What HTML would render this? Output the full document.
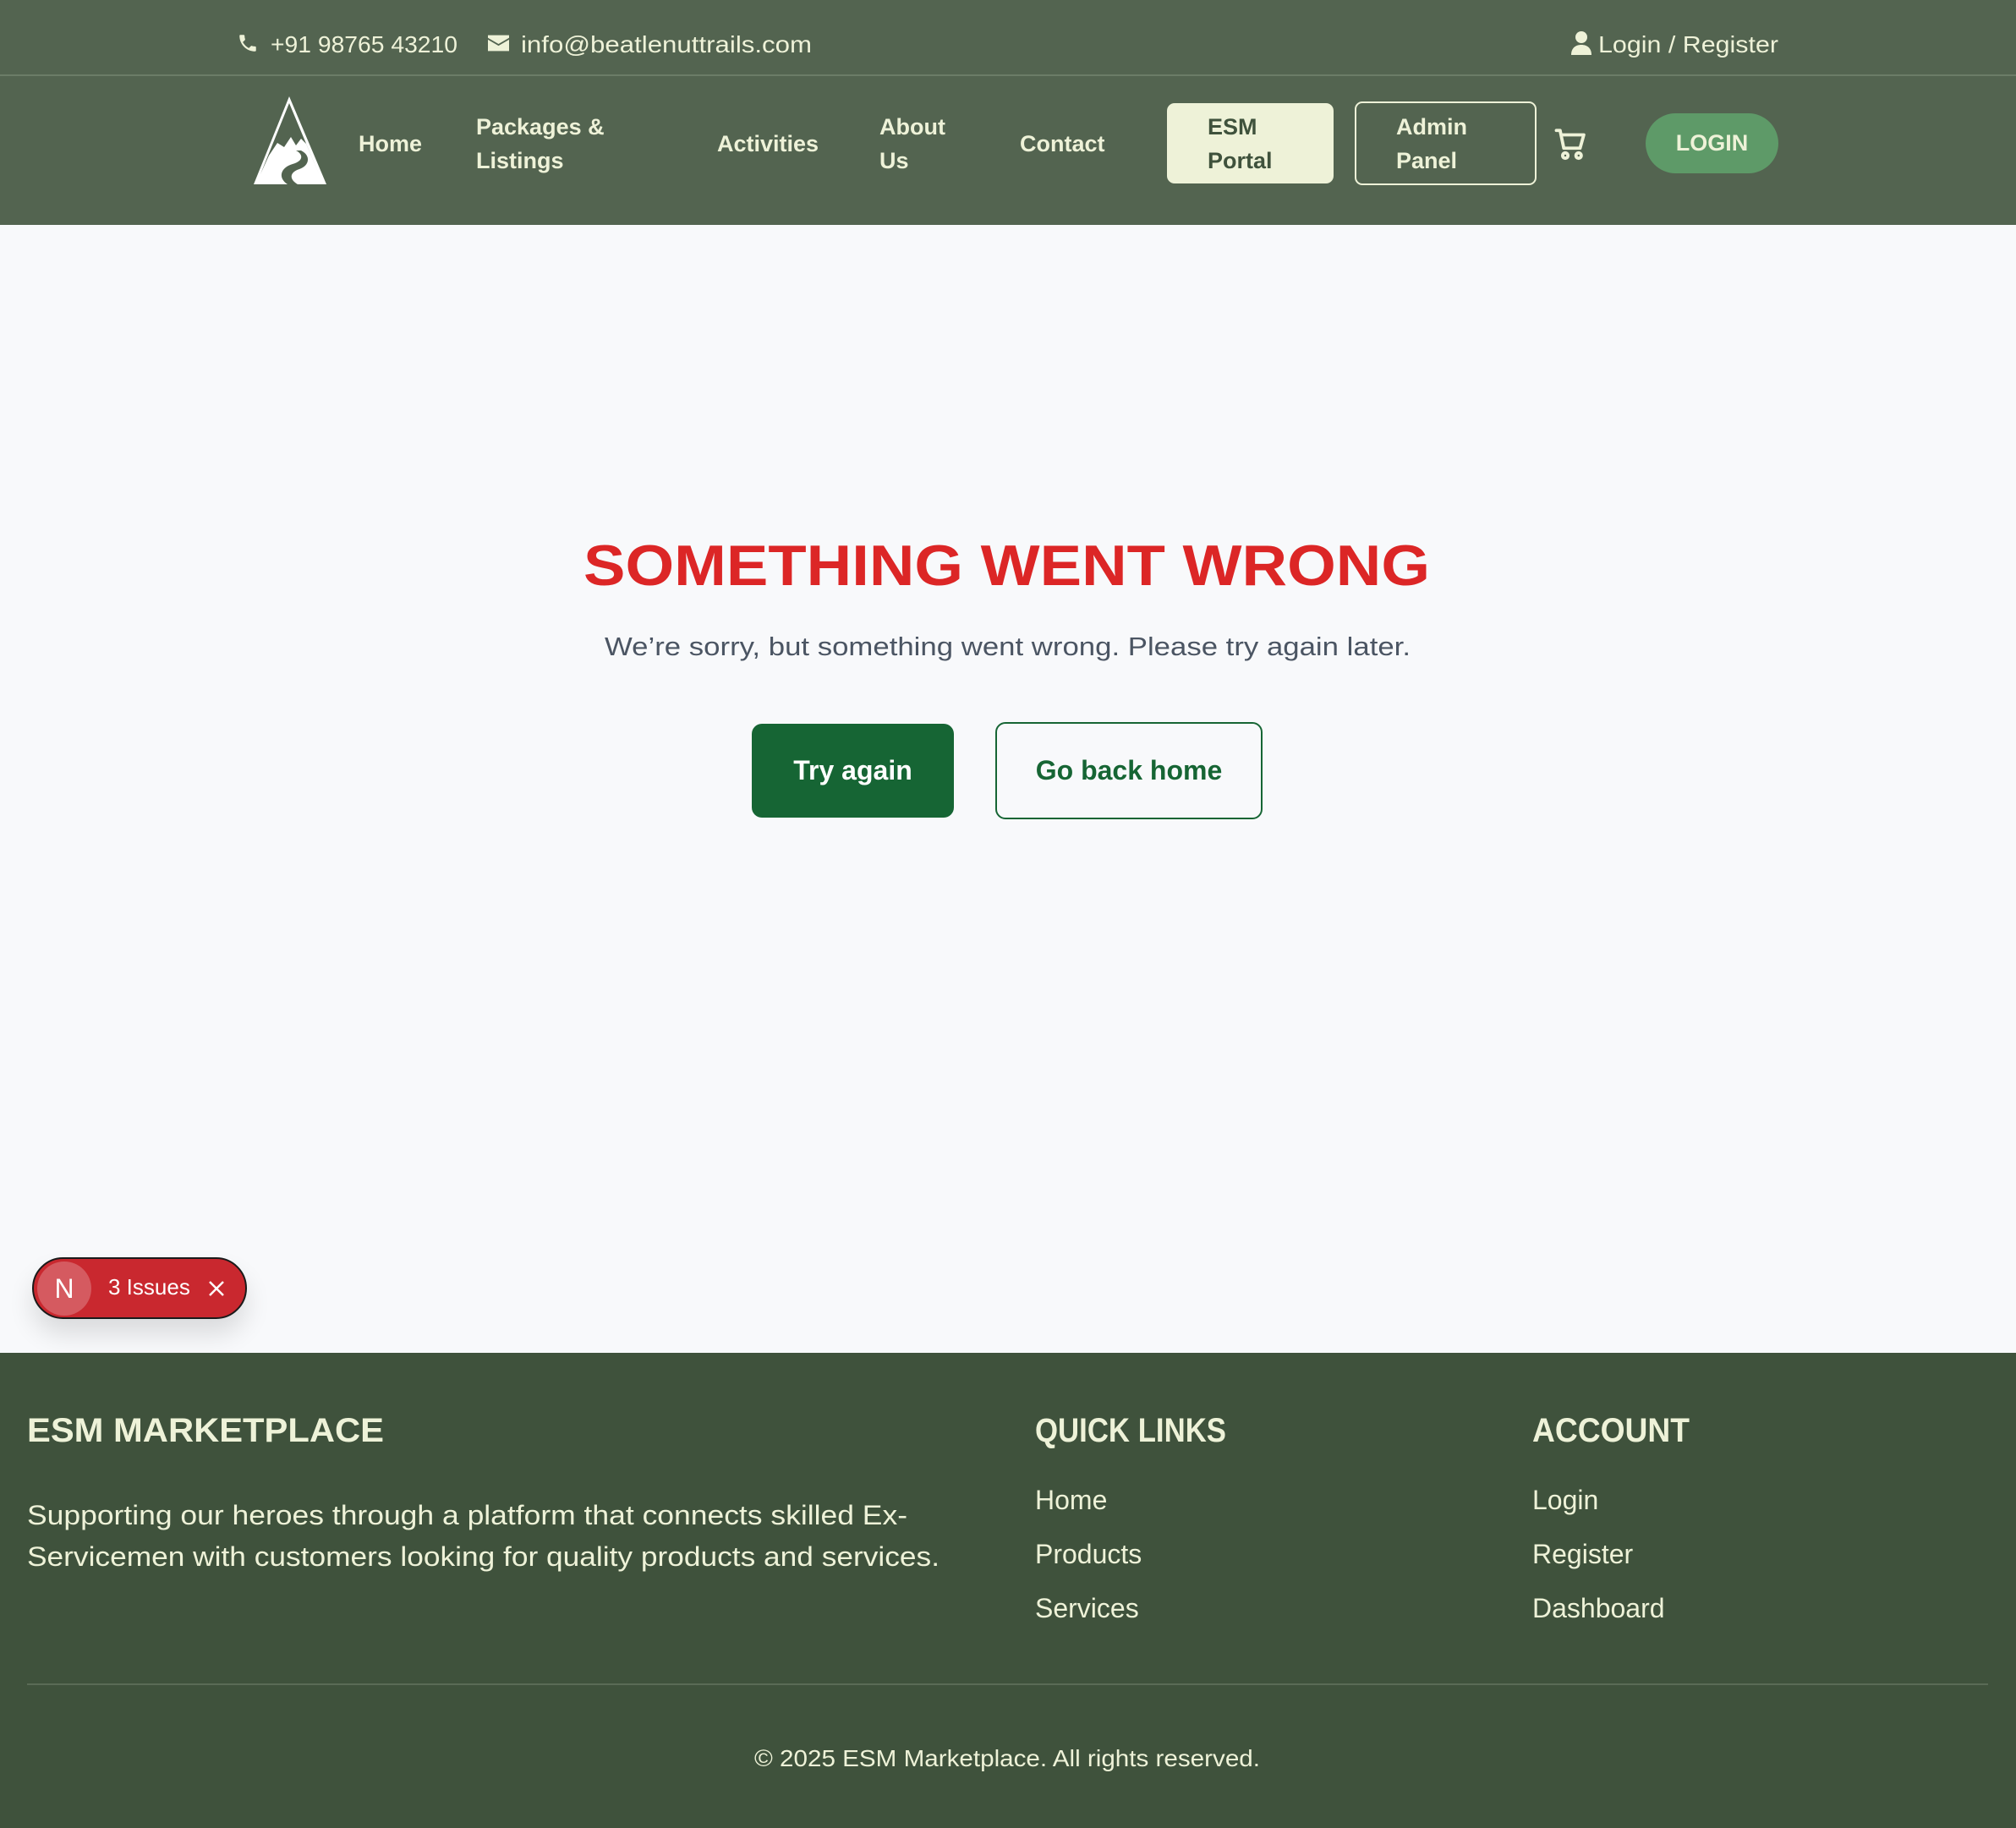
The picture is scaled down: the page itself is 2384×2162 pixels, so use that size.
<!DOCTYPE html>
<html><head><meta charset="utf-8"><style>
*{margin:0;padding:0;box-sizing:border-box}
body{width:2384px;height:2162px;background:#f8f9fb;font-family:"Liberation Sans",sans-serif;position:relative;overflow:hidden}
.a{position:absolute;white-space:nowrap}
.hdr{position:absolute;left:0;top:0;width:2384px;height:266px;background:#536450}
.line{position:absolute;left:0;top:88px;width:2384px;height:2px;background:#6b7c67}
.c{color:#eef2d8}
.nav{font-size:27px;font-weight:bold;color:#eef2d8;line-height:40px}
.foot{position:absolute;left:0;top:1600px;width:2384px;height:562px;background:#3f523c}
.fl{font-size:32px;color:#eef2d8}
</style></head><body>
<div class="hdr"></div><div class="line"></div>
<svg class="a" style="left:280px;top:38px" width="26" height="26" viewBox="0 0 24 24"><path fill="#eef2d8" d="M6.6 10.8c1.4 2.8 3.8 5.1 6.6 6.6l2.2-2.2c.3-.3.7-.4 1-.2 1.1.4 2.3.6 3.6.6.6 0 1 .4 1 1V20c0 .6-.4 1-1 1C10.6 21 3 13.4 3 4c0-.6.4-1 1-1h3.5c.6 0 1 .4 1 1 0 1.3.2 2.5.6 3.6.1.3 0 .7-.2 1z"/></svg>
<svg class="a" style="left:316px;top:30px" width="240" height="44"><text x="4" y="32" textLength="221" lengthAdjust="spacingAndGlyphs" font-family="Liberation Sans" font-size="28" fill="#eef2d8">+91 98765 43210</text></svg>
<svg class="a" style="left:577px;top:41px" width="25" height="20" viewBox="0 0 24 18"><path fill="#eef2d8" d="M0 0h24v3L12 10 0 3zM0 5l12 7 12-7v13H0z"/></svg>
<svg class="a" style="left:612px;top:30px" width="360" height="44"><text x="4" y="32" textLength="344" lengthAdjust="spacingAndGlyphs" font-family="Liberation Sans" font-size="28" fill="#eef2d8">info@beatlenuttrails.com</text></svg>
<svg class="a" style="left:1858px;top:37px" width="24" height="28" viewBox="0 0 24 28"><circle cx="12" cy="7" r="7" fill="#eef2d8"/><path fill="#eef2d8" d="M0 28c0-8 5-12 12-12s12 4 12 12z"/></svg>
<svg class="a" style="left:1886px;top:30px" width="230" height="44"><text x="4" y="32" textLength="213" lengthAdjust="spacingAndGlyphs" font-family="Liberation Sans" font-size="28" fill="#eef2d8">Login / Register</text></svg>

<svg class="a" style="left:298px;top:114px" width="90" height="106" viewBox="0 0 90 106">
<path fill="#fff" d="M44 0 L2 104 L88 104 Z"/>
<path fill="#536450" d="M44 8 L10 92 L20 70 L30 55 L38 60 L46 48 L52 58 L58 50 L64 56 L80 94 Z"/>
<path fill="#536450" d="M42 104 C30 96 34 84 48 80 C62 76 60 68 52 64 L58 64 C70 70 68 82 56 86 C44 90 44 98 54 104 Z"/>
</svg>
<div class="a nav" style="left:424px;top:150px">Home</div>
<div class="a nav" style="left:563px;top:130px">Packages &amp;<br>Listings</div>
<div class="a nav" style="left:848px;top:150px">Activities</div>
<div class="a nav" style="left:1040px;top:130px">About<br>Us</div>
<div class="a nav" style="left:1206px;top:150px">Contact</div>
<div class="a" style="left:1380px;top:122px;width:197px;height:95px;background:#eef2d8;border-radius:9px"></div>
<div class="a nav" style="left:1428px;top:130px;color:#3f523c">ESM<br>Portal</div>
<div class="a" style="left:1602px;top:120px;width:215px;height:99px;border:2px solid #eef2d8;border-radius:9px"></div>
<div class="a nav" style="left:1651px;top:130px">Admin<br>Panel</div>
<svg class="a" style="left:1837px;top:148px" width="42" height="44" viewBox="0 0 24 24" fill="none" stroke="#eef2d8" stroke-width="2.2" stroke-linecap="round" stroke-linejoin="round"><path d="M2 3h2.5l2.5 12h11l2.5-9H6"/><circle cx="8" cy="20" r="1.8"/><circle cx="17" cy="20" r="1.8"/></svg>
<div class="a" style="left:1946px;top:134px;width:157px;height:71px;background:#5e9a68;border-radius:36px;color:#eef2d8;font-size:27px;font-weight:bold;line-height:71px;text-align:center">LOGIN</div>

<svg class="a" style="left:680px;top:630px" width="1024" height="80"><text x="10" y="62" textLength="1001" lengthAdjust="spacingAndGlyphs" font-family="Liberation Sans" font-weight="900" font-size="68" fill="#dc2626">SOMETHING WENT WRONG</text></svg>
<svg class="a" style="left:700px;top:740px" width="990" height="50"><text x="15" y="35" textLength="953" lengthAdjust="spacingAndGlyphs" font-family="Liberation Sans" font-size="31" fill="#4b5563">We’re sorry, but something went wrong. Please try again later.</text></svg>
<div class="a" style="left:889px;top:856px;width:239px;height:111px;background:#166534;border-radius:12px;color:#fff;font-size:32px;font-weight:bold;line-height:111px;text-align:center">Try again</div>
<div class="a" style="left:1177px;top:854px;width:316px;height:115px;border:2px solid #166534;border-radius:12px;color:#166534;font-size:32px;font-weight:bold;line-height:111px;text-align:center">Go back home</div>

<div class="a" style="left:38px;top:1487px;width:254px;height:73px;background:#c9282f;border:2px solid #1a1a1a;border-radius:37px;box-shadow:0 18px 30px rgba(0,0,0,.12)"></div>
<div class="a" style="left:44px;top:1492px;width:64px;height:64px;border-radius:50%;background:#d55a60;color:#fff;font-size:32px;line-height:64px;text-align:center">N</div>
<div class="a" style="left:128px;top:1507px;color:#fff;font-size:26px">3 Issues</div>
<svg class="a" style="left:246px;top:1514px" width="20" height="20" viewBox="0 0 20 20"><path d="M2 2L18 18M18 2L2 18" stroke="#fff" stroke-width="2.5"/></svg>

<div class="foot"></div>
<svg class="a" style="left:30px;top:1665px" width="440" height="50"><text x="2" y="40" textLength="422" lengthAdjust="spacingAndGlyphs" font-family="Liberation Sans" font-weight="900" font-size="40" fill="#eef2d8">ESM MARKETPLACE</text></svg>
<svg class="a" style="left:1222px;top:1665px" width="240" height="50"><text x="2" y="40" textLength="226" lengthAdjust="spacingAndGlyphs" font-family="Liberation Sans" font-weight="900" font-size="40" fill="#eef2d8">QUICK LINKS</text></svg>
<svg class="a" style="left:1810px;top:1665px" width="200" height="50"><text x="2" y="40" textLength="186" lengthAdjust="spacingAndGlyphs" font-family="Liberation Sans" font-weight="900" font-size="40" fill="#eef2d8">ACCOUNT</text></svg>
<svg class="a" style="left:30px;top:1760px" width="1100" height="110"><text x="2" y="43" textLength="1041" lengthAdjust="spacingAndGlyphs" font-family="Liberation Sans" font-size="32" fill="#eef2d8">Supporting our heroes through a platform that connects skilled Ex-</text><text x="2" y="92" textLength="1079" lengthAdjust="spacingAndGlyphs" font-family="Liberation Sans" font-size="32" fill="#eef2d8">Servicemen with customers looking for quality products and services.</text></svg>
<div class="a fl" style="left:1224px;top:1756px">Home</div>
<div class="a fl" style="left:1224px;top:1820px">Products</div>
<div class="a fl" style="left:1224px;top:1884px">Services</div>
<div class="a fl" style="left:1812px;top:1756px">Login</div>
<div class="a fl" style="left:1812px;top:1820px">Register</div>
<div class="a fl" style="left:1812px;top:1884px">Dashboard</div>
<div class="a" style="left:32px;top:1991px;width:2319px;height:2px;background:#5a6b56"></div>
<svg class="a" style="left:880px;top:2058px" width="624" height="44"><text x="12" y="31" textLength="598" lengthAdjust="spacingAndGlyphs" font-family="Liberation Sans" font-size="28" fill="#eef2d8">© 2025 ESM Marketplace. All rights reserved.</text></svg>
</body></html>
